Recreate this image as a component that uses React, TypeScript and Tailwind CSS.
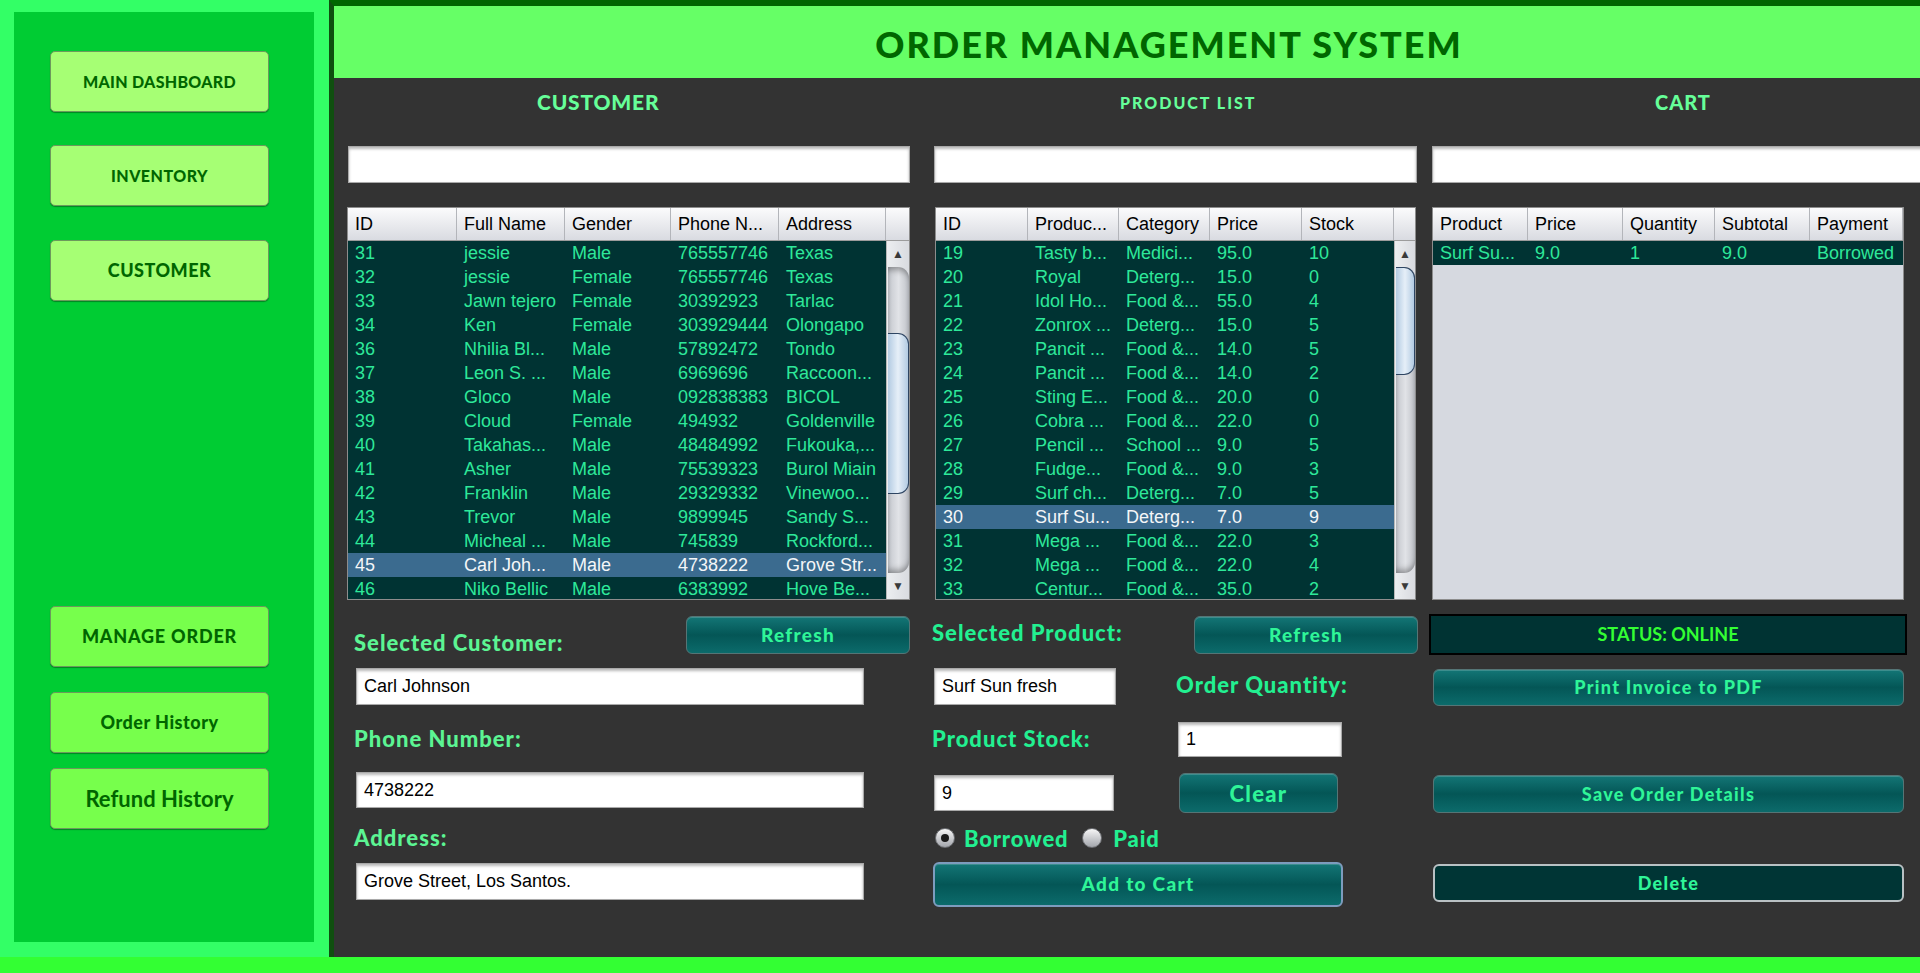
import React from 'react';

type Col = { name: string; cls: string };

const customerCols: Col[] = [
  { name: 'ID', cls: 'w-[109px]' },
  { name: 'Full Name', cls: 'w-[108px]' },
  { name: 'Gender', cls: 'w-[106px]' },
  { name: 'Phone N...', cls: 'w-[108px]' },
  { name: 'Address', cls: 'w-[107px]' },
];

const productCols: Col[] = [
  { name: 'ID', cls: 'w-[92px]' },
  { name: 'Produc...', cls: 'w-[91px]' },
  { name: 'Category', cls: 'w-[91px]' },
  { name: 'Price', cls: 'w-[92px]' },
  { name: 'Stock', cls: 'w-[92px]' },
];

const cartCols: Col[] = [
  { name: 'Product', cls: 'w-[95px]' },
  { name: 'Price', cls: 'w-[95px]' },
  { name: 'Quantity', cls: 'w-[92px]' },
  { name: 'Subtotal', cls: 'w-[95px]' },
  { name: 'Payment', cls: 'w-[93px]' },
];

const customers = [
  ['31', 'jessie', 'Male', '765557746', 'Texas'],
  ['32', 'jessie', 'Female', '765557746', 'Texas'],
  ['33', 'Jawn tejero', 'Female', '30392923', 'Tarlac'],
  ['34', 'Ken', 'Female', '303929444', 'Olongapo'],
  ['36', 'Nhilia Bl...', 'Male', '57892472', 'Tondo'],
  ['37', 'Leon S. ...', 'Male', '6969696', 'Raccoon...'],
  ['38', 'Gloco', 'Male', '092838383', 'BICOL'],
  ['39', 'Cloud', 'Female', '494932', 'Goldenville'],
  ['40', 'Takahas...', 'Male', '48484992', 'Fukouka,...'],
  ['41', 'Asher', 'Male', '75539323', 'Burol Miain'],
  ['42', 'Franklin', 'Male', '29329332', 'Vinewoo...'],
  ['43', 'Trevor', 'Male', '9899945', 'Sandy S...'],
  ['44', 'Micheal ...', 'Male', '745839', 'Rockford...'],
  ['45', 'Carl Joh...', 'Male', '4738222', 'Grove Str...'],
  ['46', 'Niko Bellic', 'Male', '6383992', 'Hove Be...'],
];

const products = [
  ['19', 'Tasty b...', 'Medici...', '95.0', '10'],
  ['20', 'Royal', 'Deterg...', '15.0', '0'],
  ['21', 'Idol Ho...', 'Food &...', '55.0', '4'],
  ['22', 'Zonrox ...', 'Deterg...', '15.0', '5'],
  ['23', 'Pancit ...', 'Food &...', '14.0', '5'],
  ['24', 'Pancit ...', 'Food &...', '14.0', '2'],
  ['25', 'Sting E...', 'Food &...', '20.0', '0'],
  ['26', 'Cobra ...', 'Food &...', '22.0', '0'],
  ['27', 'Pencil ...', 'School ...', '9.0', '5'],
  ['28', 'Fudge...', 'Food &...', '9.0', '3'],
  ['29', 'Surf ch...', 'Deterg...', '7.0', '5'],
  ['30', 'Surf Su...', 'Deterg...', '7.0', '9'],
  ['31', 'Mega ...', 'Food &...', '22.0', '3'],
  ['32', 'Mega ...', 'Food &...', '22.0', '4'],
  ['33', 'Centur...', 'Food &...', '35.0', '2'],
];

const cart = [['Surf Su...', '9.0', '1', '9.0', 'Borrowed']];

const labelCls = "h-[24px] leading-[24px] font-['Lato',sans-serif] font-black text-[22px] tracking-[1px] whitespace-nowrap";

const Scrollbar = ({ widthCls, thumbCls }: { widthCls: string; thumbCls: string }) => (
  <div className={`${widthCls} shrink-0 flex flex-col bg-gradient-to-r from-[#eceef0] to-[#d9dbe0] border-l border-[#b8b8b8]`}>
    <div className="h-[26px] flex items-center justify-center text-[12px] text-[#3a3a3a]">▲</div>
    <div className="flex-1 ml-[1px] rounded-r-[11px] bg-gradient-to-r from-[#c4c7cd] via-[#e1e3e7] to-[#bfc2c8] shadow-[inset_0_6px_6px_-3px_rgba(0,0,0,0.35),inset_0_-6px_6px_-3px_rgba(0,0,0,0.35)] flex flex-col">
      <div className={`${thumbCls} rounded-r-[11px] border border-l-0 border-[#2e4562] bg-gradient-to-r from-[#b3cbe2] via-[#e6eff8] to-[#b3cbe2]`} />
    </div>
    <div className="h-[26px] flex items-center justify-center text-[12px] text-[#3a3a3a]">▼</div>
  </div>
);

const DataTable = ({
  cols,
  rows,
  selected,
  className,
  scroll,
}: {
  cols: Col[];
  rows: string[][];
  selected: number;
  className: string;
  scroll?: { widthCls: string; thumbCls: string };
}) => (
  <div className={`${className} h-[393px] shrink-0 border border-[#8d8d8d] flex flex-col overflow-hidden`}>
    <div className="h-[33px] shrink-0 flex bg-gradient-to-b from-[#fbfbfc] to-[#d9dbe1] border-b border-[#9c9c9c]">
      {cols.map((c) => (
        <div key={c.name} className={`${c.cls} shrink-0 pl-[7px] flex items-center text-[18px] text-black border-r border-[#b3b5ba] whitespace-nowrap overflow-hidden`}>
          {c.name}
        </div>
      ))}
      {scroll && <div className="flex-1" />}
    </div>
    <div className="flex flex-1 min-h-0">
      <div className={`flex-1 flex flex-col ${scroll ? 'bg-[#003333]' : 'bg-[#d6d9e0]'}`}>
        {rows.map((r, i) => (
          <div
            key={i}
            className={`h-[24px] shrink-0 flex items-center text-[18px] ${i === selected ? 'bg-[#3b6b8f] text-[#f4f6f8]' : 'bg-[#003333] text-[#2ee89a]'}`}
          >
            {r.map((v, j) => (
              <div key={j} className={`${cols[j].cls} shrink-0 pl-[7px] whitespace-nowrap overflow-hidden`}>
                {v}
              </div>
            ))}
          </div>
        ))}
      </div>
      {scroll && <Scrollbar widthCls={scroll.widthCls} thumbCls={scroll.thumbCls} />}
    </div>
  </div>
);

const Field = ({ value, className }: { value: string; className: string }) => (
  <div className={`${className} shrink-0 bg-white border border-[#a9a9a9] shadow-[inset_0_2px_3px_rgba(0,0,0,0.28)] flex items-center pl-[7px] text-[18px] text-black whitespace-nowrap overflow-hidden`}>
    {value}
  </div>
);

const TealButton = ({ label, className }: { label: string; className: string }) => (
  <div
    className={`${className} shrink-0 rounded-[6px] border border-[#557576] bg-gradient-to-b from-[#137676] via-[#045656] to-[#0c6b6b] shadow-[inset_0_1px_0_rgba(255,255,255,0.18)] flex items-center justify-center font-['Lato',sans-serif] font-black tracking-[1.3px] text-[#2ff598]`}
  >
    {label}
  </div>
);

const SideButton = ({ label, className }: { label: string; className: string }) => (
  <div
    className={`${className} w-[219px] h-[61px] rounded-[5px] border border-[#6c9a5c] shadow-[0_1px_1px_rgba(0,0,0,0.35)] flex items-center justify-center font-['Lato',sans-serif] text-[#006600]`}
  >
    {label}
  </div>
);

const Radio = ({ checked }: { checked?: boolean }) => (
  <span className="w-[20px] h-[20px] rounded-full border border-[#6d6f73] bg-gradient-to-b from-[#f7f7f7] to-[#a3a6ac] flex items-center justify-center">
    {checked && <span className="w-[8px] h-[8px] rounded-full bg-[#1b1b1b]" />}
  </span>
);

export default function App() {
  return (
    <div className="w-[1920px] h-[973px] flex flex-col overflow-hidden bg-[#33ff33] font-['Liberation_Sans',Arial,sans-serif]">
      <div className="flex h-[957px]">
        {/* sidebar */}
        <aside className="w-[329px] h-full shrink-0 bg-[#33ff66] pt-[12px] pl-[14px] pr-[15px] pb-[15px]">
          <div className="h-full bg-[#00cc33] flex flex-col pl-[36px] pt-[39px]">
            <SideButton label="MAIN DASHBOARD" className="bg-[#a6ff74] font-black text-[16px] tracking-[0.3px]" />
            <SideButton label="INVENTORY" className="mt-[33px] bg-[#a6ff74] font-black text-[16px] tracking-[0.5px]" />
            <SideButton label="CUSTOMER" className="mt-[34px] bg-[#a6ff74] font-black text-[18px] tracking-[0.5px]" />
            <SideButton label="MANAGE ORDER" className="mt-[305px] bg-[#77ff4c] font-black text-[18px] tracking-[0.8px]" />
            <SideButton label="Order History" className="mt-[25px] bg-[#77ff4c] font-black text-[18px] tracking-[0.5px]" />
            <SideButton label="Refund History" className="mt-[15px] bg-[#77ff4c] font-bold text-[22px]" />
          </div>
        </aside>

        {/* main panel */}
        <main className="flex-1 flex flex-col overflow-hidden bg-[#333333] border-l-[5px] border-t-[6px] border-l-[#0f4f0f] border-t-[#006600]">
          <header className="h-[72px] shrink-0 bg-[#66ff66] flex items-center justify-center pl-[84px] pt-[4px] font-['Lato',sans-serif] font-black text-[36px] tracking-[2px] text-[#006600]">
            ORDER MANAGEMENT SYSTEM
          </header>

          <div className="flex flex-1 pl-[13px]">
            {/* customer column */}
            <section className="w-[563px] shrink-0 flex flex-col">
              <h2 className="mt-[12px] h-[24px] pl-[190px] leading-[24px] font-['Lato',sans-serif] font-black text-[21px] tracking-[0.8px] text-[#66ff99]">CUSTOMER</h2>
              <Field value="" className="mt-[32px] ml-[1px] w-[562px] h-[37px]" />
              <DataTable
                cols={customerCols}
                rows={customers}
                selected={13}
                className="mt-[24px] w-[563px]"
                scroll={{ widthCls: 'w-[23px]', thumbCls: 'mt-[66px] h-[161px]' }}
              />
              <div className="mt-[16px] h-[38px] flex">
                <span className={`${labelCls} pl-[7px] mt-[15px] text-[#5cf593]`}>Selected Customer:</span>
                <TealButton label="Refresh" className="ml-auto w-[224px] h-[38px] text-[19px]" />
              </div>
              <Field value="Carl Johnson" className="mt-[14px] ml-[9px] w-[508px] h-[37px]" />
              <span className={`${labelCls} mt-[22px] pl-[7px] text-[#5cf593]`}>Phone Number:</span>
              <Field value="4738222" className="mt-[21px] ml-[9px] w-[508px] h-[36px]" />
              <span className={`${labelCls} mt-[18px] pl-[7px] text-[#5cf593]`}>Address:</span>
              <Field value="Grove Street, Los Santos." className="mt-[13px] ml-[9px] w-[508px] h-[37px]" />
            </section>

            {/* product column */}
            <section className="ml-[22px] w-[486px] shrink-0 flex flex-col">
              <h2 className="mt-[13px] h-[24px] pl-[188px] leading-[24px] font-['Lato',sans-serif] font-black text-[16px] tracking-[2px] text-[#66ff99]">PRODUCT LIST</h2>
              <Field value="" className="mt-[31px] ml-[2px] w-[483px] h-[37px]" />
              <DataTable
                cols={productCols}
                rows={products}
                selected={11}
                className="mt-[24px] ml-[3px] w-[481px]"
                scroll={{ widthCls: 'w-[21px]', thumbCls: 'mt-0 h-[108px]' }}
              />
              <div className="mt-[16px] h-[38px] flex">
                <span className={`${labelCls} mt-[5px] text-[#22f091]`}>Selected Product:</span>
                <TealButton label="Refresh" className="ml-auto w-[224px] h-[38px] text-[19px]" />
              </div>
              <div className="mt-[14px] flex">
                <div className="w-[244px] shrink-0 flex flex-col">
                  <Field value="Surf Sun fresh" className="ml-[2px] w-[182px] h-[37px]" />
                  <span className={`${labelCls} mt-[22px] text-[#22f091]`}>Product Stock:</span>
                  <Field value="9" className="mt-[24px] ml-[2px] w-[180px] h-[36px]" />
                  <div className="mt-[15px] h-[24px] flex items-center pl-[3px] font-['Lato',sans-serif] font-black text-[22px] tracking-[0.8px] text-[#22f091]">
                    <Radio checked />
                    <span className="ml-[9px]">Borrowed</span>
                    <span className="ml-[14px]"><Radio /></span>
                    <span className="ml-[11px]">Paid</span>
                  </div>
                </div>
                <div className="flex flex-col">
                  <span className={`${labelCls} mt-[5px] text-[#22f091]`}>Order Quantity:</span>
                  <Field value="1" className="mt-[25px] ml-[2px] w-[164px] h-[35px]" />
                  <TealButton label="Clear" className="mt-[16px] ml-[3px] w-[159px] h-[40px] text-[22px]" />
                </div>
              </div>
              <TealButton label="Add to Cart" className="mt-[12px] ml-[1px] w-[410px] h-[45px] text-[19px] !border-2 !border-[#7d9cbe]" />
            </section>

            {/* cart column */}
            <section className="ml-[11px] w-[491px] shrink-0 flex flex-col">
              <h2 className="mt-[12px] h-[24px] pl-[226px] leading-[24px] font-['Lato',sans-serif] font-black text-[20px] tracking-[1px] text-[#66ff99]">CART</h2>
              <Field value="" className="mt-[32px] ml-[3px] w-[520px] h-[37px]" />
              <DataTable cols={cartCols} rows={cart} selected={-1} className="mt-[24px] ml-[3px] w-[472px]" />
              <div className="mt-[14px] w-[478px] h-[41px] shrink-0 bg-[#003333] border-2 border-black flex items-center justify-center font-['Lato',sans-serif] font-bold text-[18px] text-[#33ff33]">
                STATUS: ONLINE
              </div>
              <TealButton label="Print Invoice to PDF" className="mt-[14px] ml-[4px] w-[471px] h-[37px] text-[18px]" />
              <TealButton label="Save Order Details" className="mt-[69px] ml-[4px] w-[471px] h-[38px] text-[18px]" />
              <div className="mt-[51px] ml-[4px] w-[471px] h-[38px] shrink-0 rounded-[6px] border-2 border-[#b9c1c4] bg-[#003535] flex items-center justify-center font-['Lato',sans-serif] font-black tracking-[1.3px] text-[18px] text-[#2ff598]">
                Delete
              </div>
            </section>
          </div>
        </main>
      </div>
      <div className="h-[16px] bg-[#33ff33]" />
    </div>
  );
}
